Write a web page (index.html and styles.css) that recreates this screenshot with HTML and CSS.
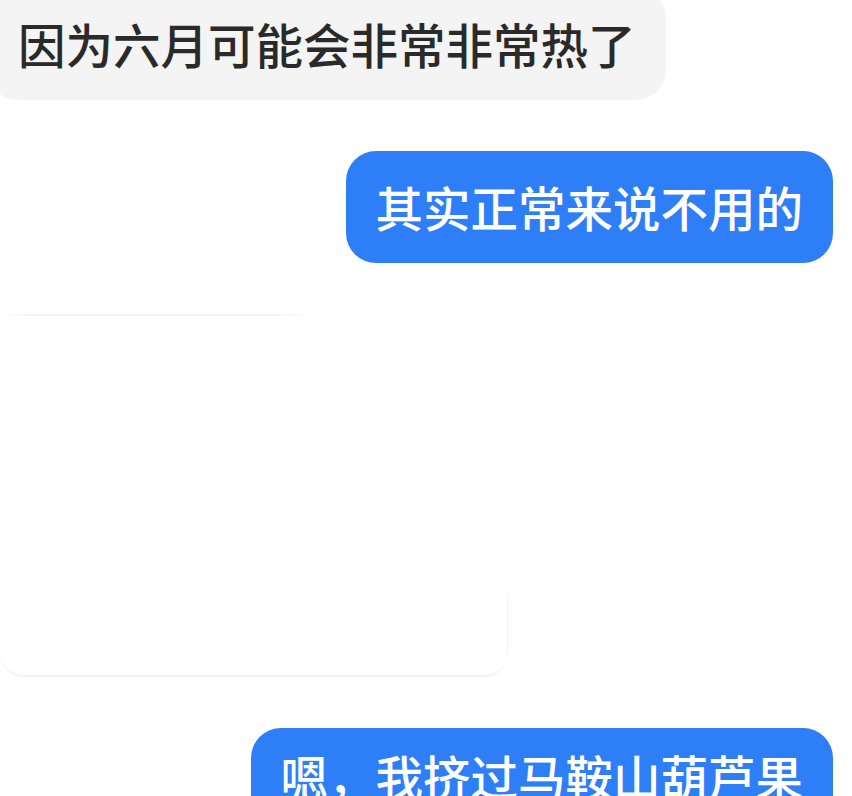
FILE: index.html
```html
<!DOCTYPE html>
<html lang="zh-CN">
<head>
<meta charset="utf-8">
<title>聊天</title>
<link rel="stylesheet" href="styles.css">
</head>
<body>
<main class="chat">
  <div class="row row-in">
    <div class="bubble bubble-in first">因为六月可能会非常非常热了</div>
  </div>
  <div class="row row-out">
    <div class="bubble bubble-out">其实正常来说不用的</div>
  </div>
  <div class="row row-in">
    <div class="photo"></div>
  </div>
  <div class="row row-out">
    <div class="bubble bubble-out last">嗯，我挤过马鞍山葫芦果</div>
  </div>
</main>
</body>
</html>
```

FILE: styles.css
```css
html, body {
  margin: 0;
  padding: 0;
  background: #ffffff;
  overflow: hidden;
}

.chat {
  display: flex;
  flex-direction: column;
  gap: 51px;
  padding: 0 19px 0 0;
  margin-top: -12px;
  font-family: "Noto Sans CJK SC", "Noto Sans", sans-serif;
}

.row {
  display: flex;
}

.row-in {
  justify-content: flex-start;
}

.row-out {
  justify-content: flex-end;
}

.bubble {
  font-size: 47.5px;
  font-weight: 500;
  line-height: 66px;
  padding: 23px 30px;
  border-radius: 30px;
  white-space: nowrap;
}

.bubble-in {
  background: #f4f4f4;
  color: #2a2a2a;
  margin-left: -12px;
}

.bubble-out {
  background: #2e7ff7;
  color: #ffffff;
}

.bubble-out.last {
  padding: 15px 30px 0 30px;
  height: 200px;
}

.photo {
  position: relative;
  width: 508px;
  height: 363px;
  border-radius: 24px;
  background: #ffffff;
  border-bottom: 2px solid #f3f3f3;
  box-sizing: border-box;
}

.photo::before {
  content: "";
  position: absolute;
  top: 0;
  left: 8px;
  width: 294px;
  height: 2px;
  background: linear-gradient(to right, rgba(240,240,240,0.3), #f3f3f3 10%, #f3f3f3 90%, rgba(240,240,240,0.3));
}

.photo::after {
  content: "";
  position: absolute;
  top: 280px;
  right: 0;
  width: 1px;
  height: 60px;
  background: #f3f3f3;
}
```
